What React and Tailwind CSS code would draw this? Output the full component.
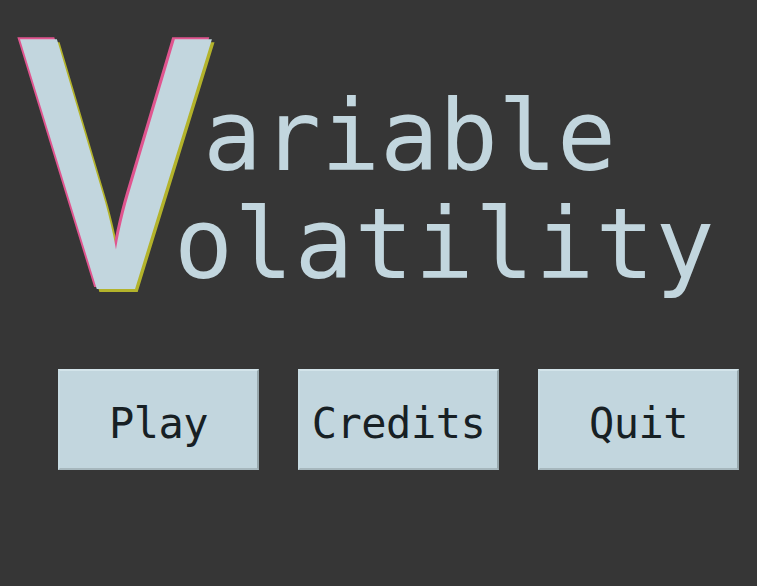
import React from "react";

const mono = { fontFamily: '"DejaVu Sans Mono", "Liberation Mono", monospace' };

function MenuButton({ label }) {
  return (
    <button
      className="w-[201px] h-[101px] bg-[#c2d6de] text-[#172024] text-[42px] tracking-[-0.5px] flex items-center justify-center pt-[8px] border-t-2 border-l-2 border-r-2 border-b-2 border-t-[#d3e4ea] border-l-[#c8dce3] border-r-[#97a7ac] border-b-[#a6b7bd]"
      style={mono}
    >
      {label}
    </button>
  );
}

export default function App() {
  return (
    <div className="w-[757px] h-[586px] bg-[#363636] overflow-hidden relative">
      <div className="flex items-start h-[360px]">
        <div className="w-[196px] shrink-0 ml-[20px] mt-[4px]">
          <span
            className="block text-[350px] leading-[300px] font-semibold text-[#c2d6de] scale-x-[0.88] origin-left"
            style={{
              fontFamily: '"Open Sans", "Noto Sans", sans-serif',
              textShadow: "-3px -2px 0 #e0558f, 3px 3px 0 #b3b32b",
            }}
          >
            V
          </span>
        </div>
        <div className="flex flex-col ml-[-35px] text-[98px] leading-[108px] text-[#c2d6de]" style={mono}>
          <span className="mt-[82px] pl-[22px] tracking-[0px]">ariable</span>
          <span className="ml-[-7px] tracking-[1.2px]">olatility</span>
        </div>
      </div>
      <div className="flex gap-[39px] pl-[58px] mt-[9px]">
        <MenuButton label="Play" />
        <MenuButton label="Credits" />
        <MenuButton label="Quit" />
      </div>
    </div>
  );
}
